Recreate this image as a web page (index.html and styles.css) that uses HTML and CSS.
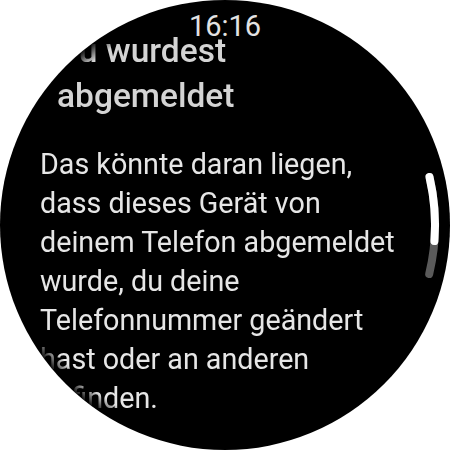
FILE: index.html
```html
<!DOCTYPE html>
<html lang="de">
<head>
<meta charset="utf-8">
<title>Abgemeldet</title>
<link rel="stylesheet" href="styles.css">
</head>
<body>
<div class="watch">
  <div class="content">
    <h1 class="title">Du wurdest<br>abgemeldet</h1>
    <p class="body-text">Das könnte daran liegen,<br>dass dieses Gerät von<br>deinem Telefon abgemeldet<br>wurde, du deine<br>Telefonnummer geändert<br>hast oder an anderen<br>befinden.</p>
  </div>
  <div class="time">16:16</div>
  <svg class="scrollbar" width="450" height="450" viewBox="0 0 450 450">
    <path d="M429.5 177 A210 210 0 0 1 429.2 274" class="track"/>
    <path d="M429.5 177 A210 210 0 0 1 434.4 241.1" class="thumb"/>
  </svg>
</div>
</body>
</html>
```
FILE: styles.css
```css
html, body {
  margin: 0;
  padding: 0;
  background: #ffffff;
}
body {
  width: 450px;
  height: 450px;
  overflow: hidden;
}
.watch {
  position: relative;
  width: 450px;
  height: 450px;
  border-radius: 50%;
  background: #000000;
  overflow: hidden;
  font-family: Roboto, "Noto Sans", sans-serif;
}
.content {
  padding-top: 28px;
  -webkit-mask-image: radial-gradient(circle at 225px 225px, #000 210px, rgba(0,0,0,0) 226px);
  mask-image: radial-gradient(circle at 225px 225px, #000 210px, rgba(0,0,0,0) 226px);
}
.title {
  margin: 0;
  padding-left: 57px;
  white-space: nowrap;
  font-size: 33.5px;
  font-weight: 500;
  line-height: 45px;
  color: #d4d4d4;
}
.body-text {
  margin: 27px 0 0 0;
  padding-left: 40px;
  white-space: nowrap;
  font-size: 28.7px;
  font-weight: 400;
  line-height: 39px;
  color: #e6e6e6;
}
.time {
  position: absolute;
  top: 9px;
  left: 0;
  right: 0;
  text-align: center;
  font-size: 29px;
  line-height: 34px;
  color: #e2e2e2;
}
.scrollbar {
  position: absolute;
  top: 0;
  left: 0;
  pointer-events: none;
}
.scrollbar path {
  fill: none;
  stroke-width: 8;
  stroke-linecap: round;
}
.track {
  stroke: #5a5a5a;
}
.thumb {
  stroke: #ffffff;
}
```
